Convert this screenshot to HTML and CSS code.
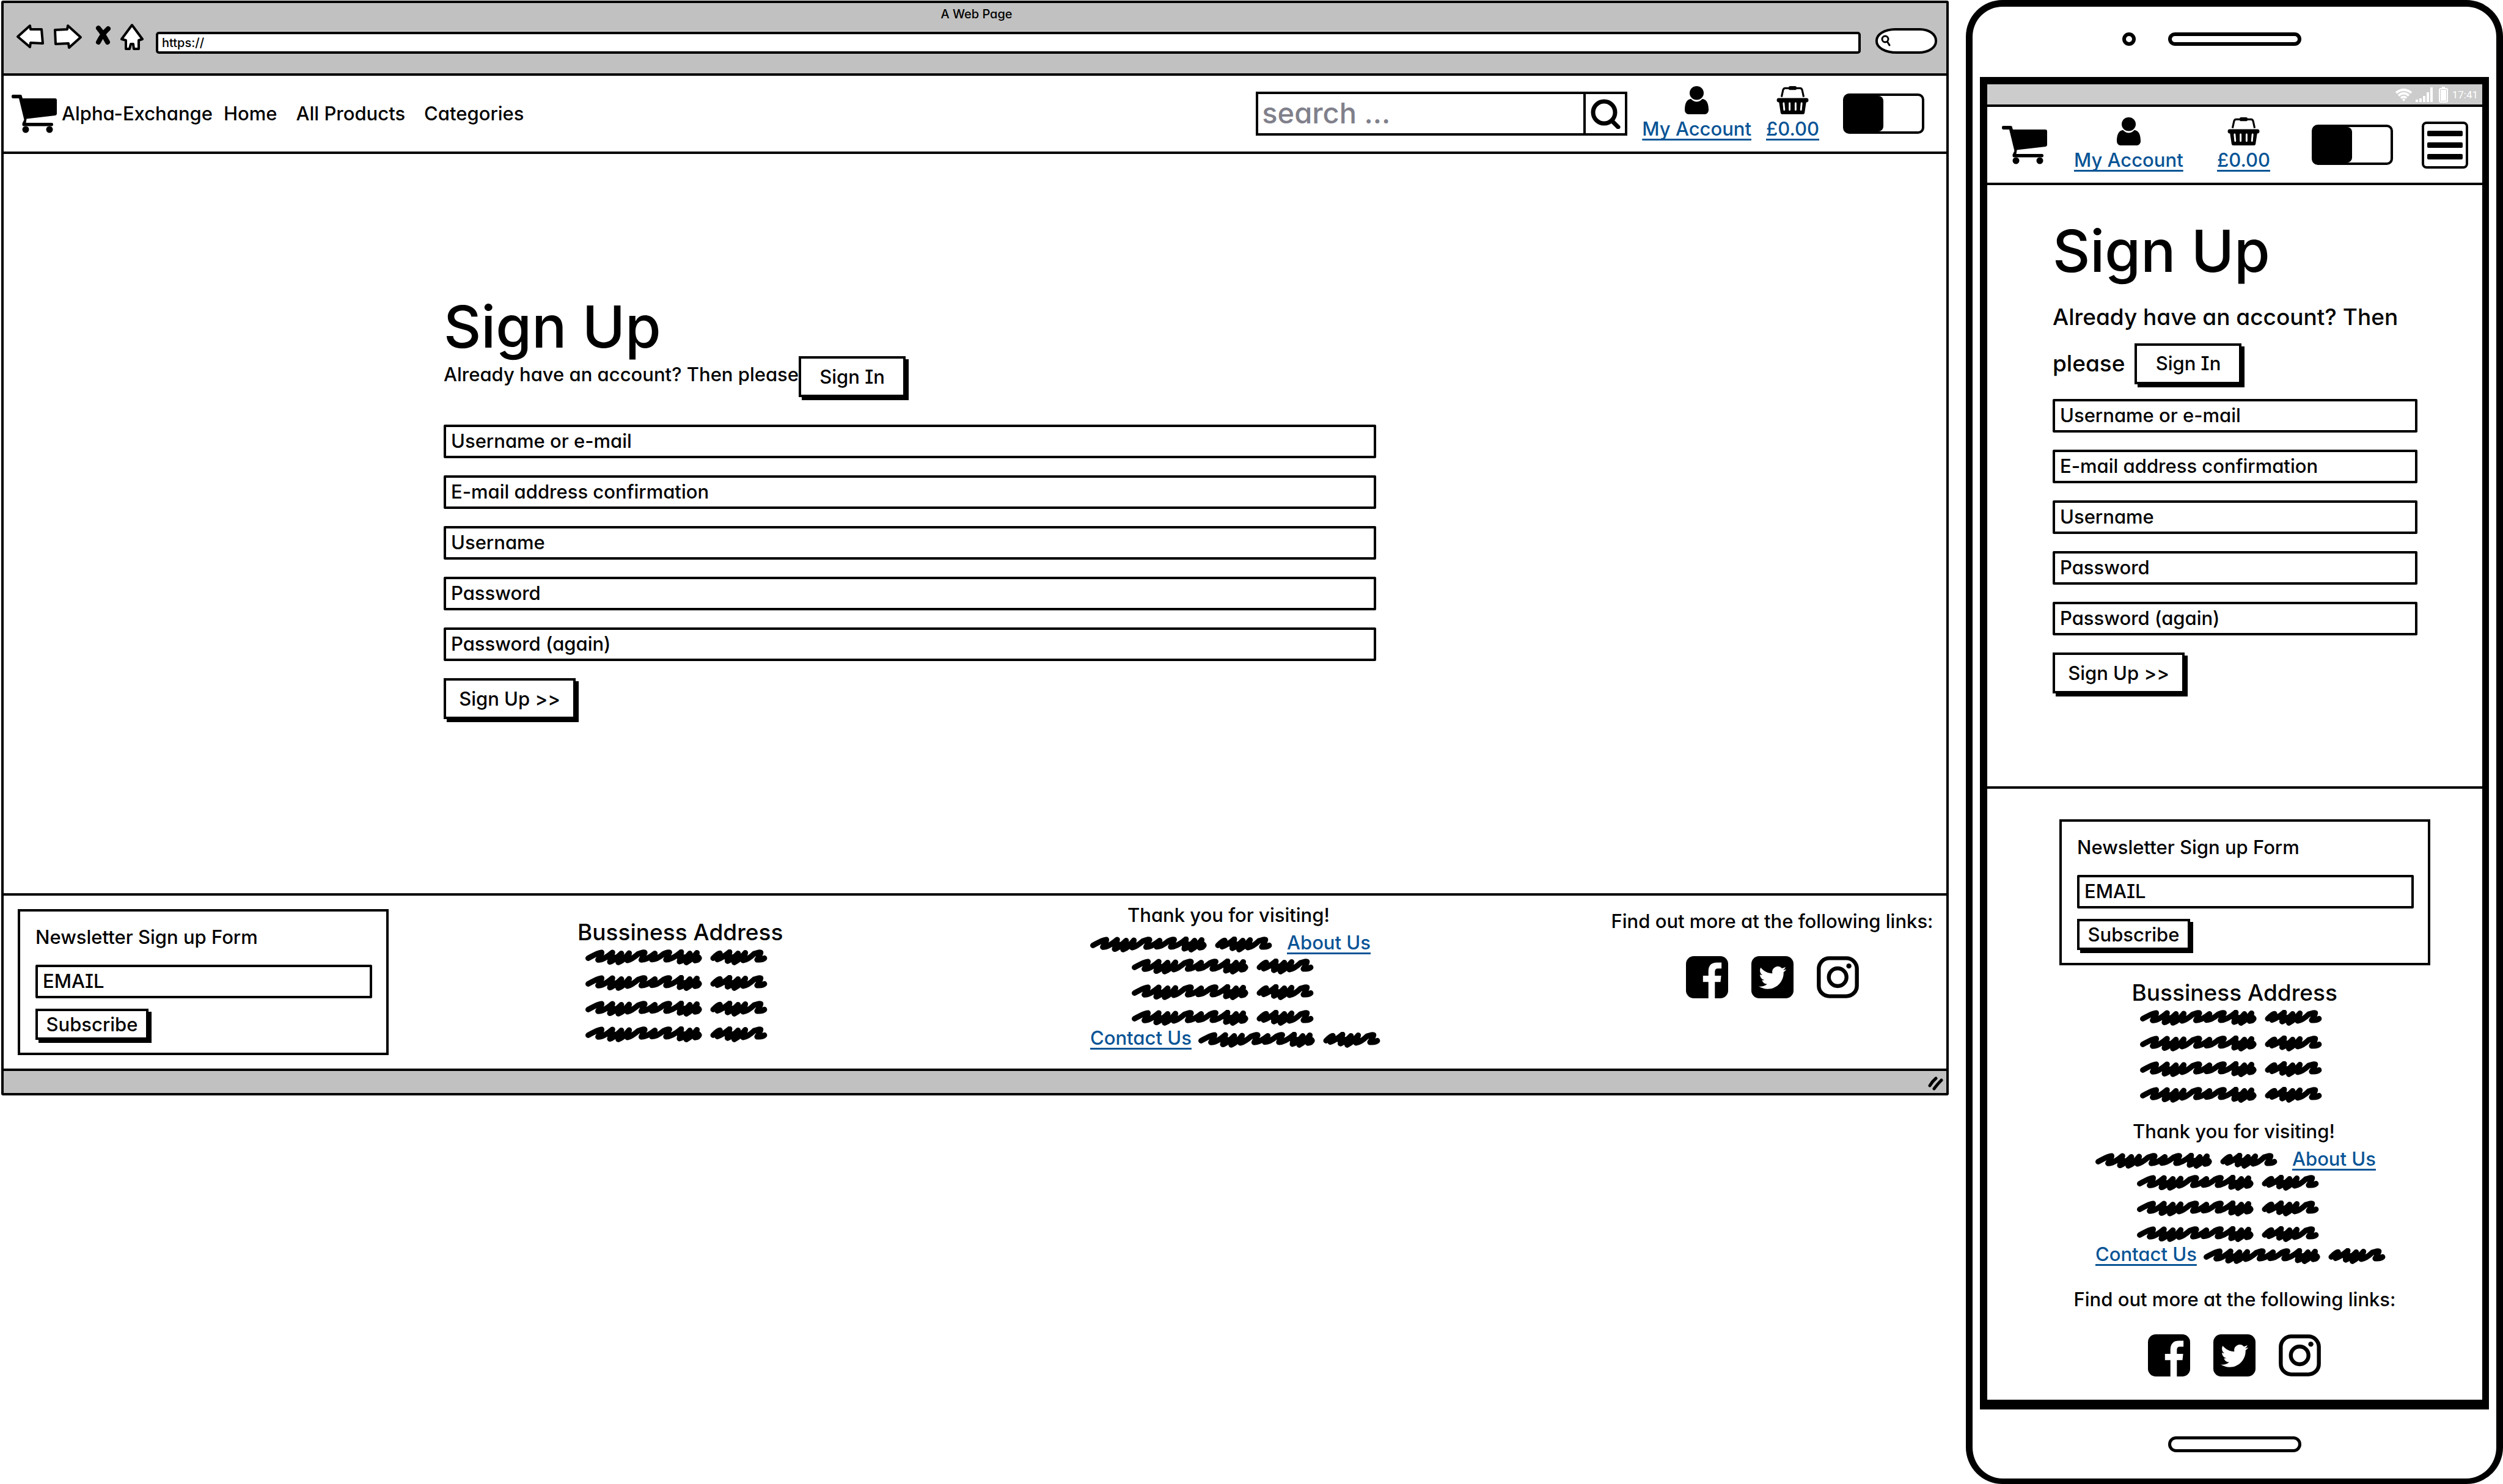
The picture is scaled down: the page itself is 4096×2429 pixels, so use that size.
FILE: index.html
```html
<!DOCTYPE html>
<html lang="en">
<head>
<meta charset="utf-8">
<title>Alpha-Exchange – Sign Up</title>
<link rel="stylesheet" href="styles.css">
</head>
<body>

<svg class="sprite" width="0" height="0" aria-hidden="true">
  <symbol id="cart" viewBox="0 0 74 63">
    <path d="M2 0H14Q17 0 17 3L18 6H71Q74 6 74 9V31Q74 33.500 71.500 34L24.500 39.500L23.500 46H65.500Q68 46 68 48.500Q68 51.500 65.500 51.500H20Q17 51.500 17.500 47L20.500 41L12 6H2.500Q0 6 0 3Q0 0 2 0Z"/>
    <circle cx="23" cy="57" r="5.500"/><circle cx="62" cy="57" r="5.500"/>
  </symbol>
  <symbol id="person" viewBox="0 0 39 46">
    <ellipse cx="19.500" cy="11.300" rx="11.500" ry="11.300"/>
    <path d="M8 21.500C10 20.500 11 21.500 12 22.500C16 26.500 23 26.500 27 22.500C28 21.500 29 20.500 31 21.500C37 23 39 31 39 39C39 43 36 46 33 46H6C3 46 0 43 0 39C0 31 2 23 8 21.500Z"/>
  </symbol>
  <symbol id="basket" viewBox="0 0 53 47">
    <path d="M8 18L10.500 6.500Q11.500 3.500 14 3.500H39Q41.500 3.500 42.500 6.500L45 18" fill="none" stroke="#000" stroke-width="3.200"/>
    <rect x="20" y="0" width="13" height="6.500" rx="2"/>
    <rect x="0" y="20" width="53" height="7" rx="3.500"/>
    <path d="M3.500 25H49.500L46.500 45Q46 47 44 47H9Q7 47 6.500 45Z"/>
    <path d="M11.500 28.500L12.500 39.500M21.500 28.500V39.500M31.500 28.500V39.500M41.500 28.500L40.500 39.500" stroke="#fff" stroke-width="3" stroke-linecap="round"/>
  </symbol>
  <symbol id="glass" viewBox="0 0 49 49">
    <circle cx="22" cy="22" r="18" fill="none" stroke="#000" stroke-width="7"/>
    <path d="M35 36L45 46" stroke="#000" stroke-width="7" stroke-linecap="round"/>
  </symbol>
  <symbol id="scribble" viewBox="38 32 1076 94">
    <g fill="none" stroke="#000" stroke-width="33" stroke-linecap="round" stroke-linejoin="round">
      <path d="M54 84Q120 46 133 50Q136 54 112 94Q140 98 197 50L182 106Q200 104 250 56L232 109Q262 98 296 54L286 97Q310 92 350 58Q390 44 388 52Q384 60 368 94Q400 94 448 56L430 92Q460 92 500 58Q540 44 533 52Q528 62 514 93Q550 92 604 47L594 104Q620 98 655 56L634 109Q668 92 697 52L686 98Q706 96 710 84"/>
      <path d="M182 80H296M594 78H706M870 78H960"/>
      <path d="M793 84Q825 52 833 55L818 92Q850 80 890 47L878 101Q905 92 940 56L918 109Q950 92 983 52L970 97Q1000 92 1035 58Q1070 46 1074 50Q1074 60 1053 93Q1085 96 1096 84"/>
    </g>
  </symbol>
  <symbol id="facebook" viewBox="0 0 248 248">
    <rect width="248" height="248" rx="46"/>
    <path fill="#fff" d="M132 248V152H100V115H132V90Q132 38 182 38H209V73H188Q170 73 170 92V115H207L203 152H170V248Z"/>
  </symbol>
  <symbol id="twitter" viewBox="0 0 248 248">
    <rect width="248" height="248" rx="46"/>
    <path fill="#fff" transform="translate(44 46) scale(6.750)" d="M23.953 4.570a10 10 0 01-2.825.775 4.958 4.958 0 002.163-2.723c-.951.555-2.005.959-3.127 1.184a4.920 4.920 0 00-8.384 4.482C7.690 8.095 4.067 6.130 1.640 3.162a4.822 4.822 0 00-.666 2.475c0 1.710.870 3.213 2.188 4.096a4.904 4.904 0 01-2.228-.616v.060a4.923 4.923 0 003.946 4.827 4.996 4.996 0 01-2.212.085 4.936 4.936 0 004.604 3.417 9.867 9.867 0 01-6.102 2.105c-.390 0-.779-.023-1.170-.067a13.995 13.995 0 007.557 2.209c9.053 0 13.998-7.496 13.998-13.985 0-.210 0-.420-.015-.630A9.935 9.935 0 0024 4.590z"/>
  </symbol>
  <symbol id="instagram" viewBox="0 0 248 248">
    <rect x="12" y="12" width="224" height="224" rx="62" fill="none" stroke="#000" stroke-width="23"/>
    <circle cx="123" cy="124" r="52" fill="none" stroke="#000" stroke-width="23"/>
    <circle cx="189" cy="58" r="15"/>
  </symbol>
</svg>

<div class="canvas">

  <section class="browser">
    <header class="chrome">
      <div class="chrome-title">A Web Page</div>
      <div class="toolbar">
        <button class="tool" type="button" aria-label="Back"><svg width="46" height="42" viewBox="0 0 46 42"><path class="arrow" d="M3 22L23 4L24 10L42 10L44 33L24 32L23 39Z"/></svg></button>
        <button class="tool" type="button" aria-label="Forward"><svg width="48" height="43" viewBox="0 0 48 43"><path class="arrow" d="M3 11L23 10L24 4L45 23L26 40L25 33L4 34Z"/></svg></button>
        <button class="tool tool-stop" type="button" aria-label="Stop"><svg width="26" height="36" viewBox="0 0 26 36"><path d="M5 8Q12 16 20 31M21 9Q12 17 5 31" fill="none" stroke="#000" stroke-width="8" stroke-linecap="round"/></svg></button>
        <button class="tool" type="button" aria-label="Home page"><svg width="38" height="45" viewBox="0 0 38 45"><path class="arrow" d="M19 3L36 26L30 28L30 42L22 42L21 34L17 34L15 42L9 42L9 28L2 26Z"/></svg></button>
        <input class="url" type="text" value="https://" aria-label="Address">
        <button class="pill" type="button" aria-label="Search the web"><svg width="18" height="20" viewBox="0 0 18 20"><circle cx="8" cy="7" r="5" fill="none" stroke="#000" stroke-width="3"/><path d="M12 12L15 17" stroke="#000" stroke-width="3" stroke-linecap="round"/></svg></button>
      </div>
    </header>

    <nav class="site-nav">
      <svg class="cart" width="74" height="63"><use href="#cart"/></svg>
      <a class="nav-link brand" href="#">Alpha-Exchange</a>
      <a class="nav-link home" href="#">Home</a>
      <a class="nav-link" href="#">All Products</a>
      <a class="nav-link" href="#">Categories</a>
      <form class="search">
        <input class="search-input" type="search" placeholder="search ..." aria-label="Search products">
        <button class="search-button" type="button" aria-label="Search"><svg width="49" height="49"><use href="#glass"/></svg></button>
      </form>
      <div class="icon-link"><svg width="39" height="46"><use href="#person"/></svg><a href="#">My Account</a></div>
      <div class="icon-link"><svg width="53" height="46"><use href="#basket"/></svg><a href="#">£0.00</a></div>
      <input class="toggle" type="checkbox" aria-label="Dark mode">
    </nav>

    <main class="desktop-main">
      <h1>Sign Up</h1>
      <div class="signin-row">
        <span>Already have an account? Then please</span>
        <button class="button signin" type="button">Sign In</button>
      </div>
      <form class="fields">
        <input class="field" type="text" placeholder="Username or e-mail" aria-label="Username or e-mail">
        <input class="field" type="email" placeholder="E-mail address confirmation" aria-label="E-mail address confirmation">
        <input class="field" type="text" placeholder="Username" aria-label="Username">
        <input class="field" type="password" placeholder="Password" aria-label="Password">
        <input class="field" type="password" placeholder="Password (again)" aria-label="Password (again)">
        <button class="button signup" type="button">Sign Up &gt;&gt;</button>
      </form>
    </main>

    <footer class="desktop-footer">
      <form class="newsletter">
        <label for="news-desktop">Newsletter Sign up Form</label>
        <input class="field" id="news-desktop" type="email" placeholder="EMAIL">
        <button class="button subscribe" type="button">Subscribe</button>
      </form>
      <section class="business">
        <h2>Bussiness Address</h2>
        <div class="lines">
          <svg class="scribble"><use href="#scribble"/></svg>
          <svg class="scribble"><use href="#scribble"/></svg>
          <svg class="scribble"><use href="#scribble"/></svg>
          <svg class="scribble"><use href="#scribble"/></svg>
        </div>
      </section>
      <section class="thanks">
        <p class="thanks-title">Thank you for visiting!</p>
        <div class="mixed about"><svg class="scribble"><use href="#scribble"/></svg><a href="#">About Us</a></div>
        <div class="lines">
          <svg class="scribble"><use href="#scribble"/></svg>
          <svg class="scribble"><use href="#scribble"/></svg>
          <svg class="scribble"><use href="#scribble"/></svg>
        </div>
        <div class="mixed contact"><a href="#">Contact Us</a><svg class="scribble"><use href="#scribble"/></svg></div>
      </section>
      <section class="social">
        <p>Find out more at the following links:</p>
        <div class="social-icons">
          <a href="#" aria-label="Facebook"><svg width="69" height="69"><use href="#facebook"/></svg></a>
          <a href="#" aria-label="Twitter"><svg width="69" height="69"><use href="#twitter"/></svg></a>
          <a href="#" aria-label="Instagram"><svg width="69" height="69"><use href="#instagram"/></svg></a>
        </div>
      </section>
    </footer>

    <div class="status-strip">
      <svg width="28" height="24" viewBox="0 0 28 24"><path d="M4 15Q8 8 14 3M11 20Q17 12 23 6" fill="none" stroke="#000" stroke-width="5" stroke-linecap="round"/></svg>
    </div>
  </section>

  <section class="phone">
    <div class="bezel-top">
      <span class="camera"></span>
      <span class="speaker"></span>
    </div>

    <div class="screen">
      <div class="phone-status">
        <svg width="29" height="22" viewBox="0 0 29 22"><path d="M2 8Q14.500 -2 27 8M6 12.500Q14.500 5 23 12.500M10 16.500Q14.500 12.500 19 16.500" fill="none" stroke="#fff" stroke-width="4"/><circle cx="14.500" cy="19.500" r="2"/></svg>
        <svg width="28" height="24" viewBox="0 0 28 24"><path d="M0 20h4v4h-4zM6 18h4v6h-4zM12 14h4v10h-4zM18 8h4v16h-4zM24 0h4v24h-4z"/></svg>
        <svg class="battery" width="15" height="26" viewBox="0 0 15 26"><path d="M5 0h5v3h-5z"/><rect x="1" y="3" width="13" height="22" rx="2" fill="none" stroke="#fff" stroke-width="2"/><path d="M3 5h9v18h-9z"/></svg>
        <span class="clock">17:41</span>
      </div>

      <nav class="phone-nav">
        <svg class="cart" width="74" height="63"><use href="#cart"/></svg>
        <div class="icon-link"><svg width="39" height="46"><use href="#person"/></svg><a href="#">My Account</a></div>
        <div class="icon-link"><svg width="53" height="46"><use href="#basket"/></svg><a href="#">£0.00</a></div>
        <input class="toggle" type="checkbox" aria-label="Dark mode">
        <button class="menu" type="button" aria-label="Menu"><span></span><span></span><span></span></button>
      </nav>

      <main class="phone-main">
        <h1>Sign Up</h1>
        <div class="signin-text">
          <p>Already have an account? Then</p>
          <div class="signin-line"><span>please</span><button class="button signin" type="button">Sign In</button></div>
        </div>
        <form class="fields">
          <input class="field" type="text" placeholder="Username or e-mail" aria-label="Username or e-mail">
          <input class="field" type="email" placeholder="E-mail address confirmation" aria-label="E-mail address confirmation">
          <input class="field" type="text" placeholder="Username" aria-label="Username">
          <input class="field" type="password" placeholder="Password" aria-label="Password">
          <input class="field" type="password" placeholder="Password (again)" aria-label="Password (again)">
          <button class="button signup" type="button">Sign Up &gt;&gt;</button>
        </form>
      </main>

      <footer class="phone-footer">
        <form class="newsletter">
          <label for="news-phone">Newsletter Sign up Form</label>
          <input class="field" id="news-phone" type="email" placeholder="EMAIL">
          <button class="button subscribe" type="button">Subscribe</button>
        </form>
        <section class="business">
          <h2>Bussiness Address</h2>
          <div class="lines">
            <svg class="scribble"><use href="#scribble"/></svg>
            <svg class="scribble"><use href="#scribble"/></svg>
            <svg class="scribble"><use href="#scribble"/></svg>
            <svg class="scribble"><use href="#scribble"/></svg>
          </div>
        </section>
        <section class="thanks">
          <p class="thanks-title">Thank you for visiting!</p>
          <div class="mixed about"><svg class="scribble"><use href="#scribble"/></svg><a href="#">About Us</a></div>
          <div class="lines">
            <svg class="scribble"><use href="#scribble"/></svg>
            <svg class="scribble"><use href="#scribble"/></svg>
            <svg class="scribble"><use href="#scribble"/></svg>
          </div>
          <div class="mixed contact"><a href="#">Contact Us</a><svg class="scribble"><use href="#scribble"/></svg></div>
        </section>
        <section class="social">
          <p>Find out more at the following links:</p>
          <div class="social-icons">
            <a href="#" aria-label="Facebook"><svg width="69" height="69"><use href="#facebook"/></svg></a>
            <a href="#" aria-label="Twitter"><svg width="69" height="69"><use href="#twitter"/></svg></a>
            <a href="#" aria-label="Instagram"><svg width="69" height="69"><use href="#instagram"/></svg></a>
          </div>
        </section>
      </footer>
    </div>

    <div class="bezel-bottom"><span class="home-key"></span></div>
  </section>

</div>
</body>
</html>
```
FILE: styles.css
```css
* {
  box-sizing: border-box;
}

body {
  margin: 0;
  background: #fff;
  color: #000;
  font-family: Inter, Lato, sans-serif;
  font-size: 31px;
  font-weight: 500;
  line-height: 40px;
  font-feature-settings: "cv11", "cv08";
}

h1,
h2,
p {
  margin: 0;
  font-weight: 500;
}

h1 {
  font-size: 95px;
  line-height: 96px;
}

h2 {
  font-size: 37px;
  line-height: 44px;
  white-space: nowrap;
}

svg {
  display: block;
  flex: none;
}

.sprite {
  display: none;
}

input,
button {
  margin: 0;
  color: inherit;
  font: inherit;
  font-feature-settings: inherit;
}

a {
  color: #085496;
  text-decoration: underline;
  text-decoration-thickness: 3px;
  text-decoration-skip-ink: none;
  text-underline-offset: 5px;
  white-space: nowrap;
}

.canvas {
  display: grid;
  grid-template-columns: minmax(0, 3187fr) minmax(0, 879fr);
  gap: 28px;
  align-items: start;
  min-height: 100vh;
  padding-left: 2px;
}

/* Browser window */

.browser {
  margin-top: 1px;
  border: 4px solid #000;
  border-radius: 3px;
}

.chrome {
  height: 119px;
  padding: 3px 15px 0 20px;
  border-bottom: 4px solid #000;
  background: #c1c1c1;
}

.chrome-title {
  font-size: 20px;
  line-height: 30px;
  text-align: center;
}

.toolbar {
  display: flex;
  gap: 15px;
  height: 50px;
}

.tool {
  align-self: flex-start;
  padding: 0;
  border: 0;
  background: none;
}

.tool-stop {
  margin-left: 6px;
}

.arrow {
  fill: #fff;
  stroke: #000;
  stroke-width: 4px;
  stroke-linejoin: round;
}

.url {
  flex: 1;
  min-width: 0;
  align-self: flex-end;
  height: 36px;
  margin: 0 9px 0 5px;
  padding: 0 6px;
  border: 4px solid #000;
  border-radius: 5px;
  background: #fff;
  font-size: 20px;
}

.pill {
  align-self: flex-end;
  width: 101px;
  height: 42px;
  padding: 0 4px;
  border: 4px solid #000;
  border-radius: 32px 28px 30px 34px / 20px;
  background: #fff;
}

/* Navigation */

.site-nav {
  display: flex;
  align-items: center;
  height: 128px;
  padding: 0 36px 0 13px;
  border-bottom: 4px solid #000;
}

.nav-link {
  margin-left: 31px;
  color: #000;
  text-decoration: none;
}

.brand {
  margin-left: 8px;
}

.home {
  margin-left: 18px;
}

.search {
  display: flex;
  width: 608px;
  height: 72px;
  margin-left: auto;
  border: 4px solid #000;
}

.search-input {
  flex: 1;
  min-width: 0;
  padding: 0 0 4px 6px;
  border: 0;
  background: none;
  font-size: 47px;
}

.search-input::placeholder {
  color: #80808b;
  opacity: 1;
}

.search-button {
  display: grid;
  place-items: center;
  width: 68px;
  padding: 0;
  border: 0;
  border-left: 4px solid #000;
  background: #fff;
}

.icon-link {
  display: flex;
  flex-direction: column;
  align-items: center;
  gap: 4px;
}

.site-nav .icon-link {
  margin-left: 24px;
}

.toggle {
  appearance: none;
  width: 133px;
  height: 66px;
  border: 4px solid #000;
  border-radius: 10px;
  background: #fff;
}

.toggle::before {
  content: "";
  display: block;
  width: 62px;
  height: 100%;
  border-radius: 0 8px 8px 0;
  background: #000;
}

.site-nav .toggle {
  margin-left: 39px;
}

/* Sign-up form */

.desktop-main {
  width: 48%;
  margin-left: 720px;
  padding: 235px 0 285px;
}

.signin-row {
  display: flex;
  align-items: flex-start;
  line-height: 60px;
}

.button {
  height: 67px;
  border: 4px solid #000;
  background: #fff;
  box-shadow: 5px 5px 0 #000;
  font-size: 31px;
  line-height: 40px;
  white-space: nowrap;
}

.signin {
  width: 175px;
  padding: 0;
}

.signup {
  width: 216px;
  padding: 0;
}

.fields {
  display: grid;
  justify-items: start;
  gap: 28px;
  margin-top: 45px;
}

.field {
  width: 100%;
  height: 55px;
  padding: 0 8px 3px;
  border: 4px solid #000;
  border-radius: 2px;
  background: #fff;
}

.field::placeholder {
  color: #000;
  opacity: 1;
}

/* Footer */

.desktop-footer {
  display: grid;
  grid-template-columns: minmax(0, 916fr) minmax(0, 839fr) minmax(0, 856fr) minmax(0, 520fr);
  align-items: start;
  height: 291px;
  padding: 0 25px 0 23px;
  border-top: 4px solid #000;
  border-bottom: 4px solid #000;
}

.newsletter {
  display: grid;
  justify-items: start;
  align-content: start;
  width: 607px;
  height: 239px;
  padding: 22px 23px 0 25px;
  border: 4px solid #000;
}

.newsletter .field {
  margin: 25px 0 17px;
}

.subscribe {
  width: 185px;
  height: 51px;
  padding: 0;
}

.lines {
  display: grid;
  gap: 16px;
}

.scribble {
  width: 298px;
  height: 26px;
}

.business .lines {
  padding: 6px 0 0 13px;
}

.thanks .lines {
  padding: 6px 0 0 68px;
}

.thanks-title {
  padding-left: 61px;
}

.mixed {
  display: flex;
  align-items: center;
}

.mixed .scribble {
  margin-top: 6px;
}

.about {
  gap: 24px;
  margin-top: 5px;
}

.contact {
  gap: 11px;
}

.social {
  display: grid;
  justify-content: center;
  justify-items: center;
  gap: 37px;
  white-space: nowrap;
}

.social-icons {
  display: flex;
  gap: 38px;
}

.desktop-footer .newsletter {
  margin-top: 22px;
}

.desktop-footer .business {
  margin-top: 38px;
}

.desktop-footer .thanks {
  margin-top: 12px;
}

.desktop-footer .social {
  margin-top: 22px;
}

.status-strip {
  display: flex;
  justify-content: flex-end;
  align-items: center;
  height: 36px;
  padding: 6px 3px 0 0;
  background: #c1c1c1;
}

/* Phone */

.phone {
  display: flex;
  flex-direction: column;
  min-height: 100vh;
  border: solid #000;
  border-width: 11px 11px 9px;
  border-radius: 60px;
}

.bezel-top {
  display: grid;
  grid-template-columns: 1fr 218px 1fr;
  align-items: center;
  height: 115px;
  padding-bottom: 10px;
}

.camera {
  justify-self: end;
  width: 22px;
  height: 22px;
  margin-right: 53px;
  border: 6px solid #000;
  border-radius: 50%;
}

.speaker {
  height: 22px;
  border: 6px solid #000;
  border-radius: 11px;
}

.screen {
  flex: 1;
  margin: 0 12px;
  border: solid #000;
  border-width: 12px 11px 16px 12px;
}

.phone-status {
  display: flex;
  justify-content: flex-end;
  align-items: center;
  gap: 5px;
  height: 37px;
  padding-right: 7px;
  border-bottom: 4px solid #000;
  background: #ccc;
  color: #fff;
  fill: #fff;
}

.battery {
  margin: 0 2px 0 5px;
}

.clock {
  font-family: Roboto, sans-serif;
  font-size: 17px;
  font-weight: 400;
  line-height: 24px;
}

.phone-nav {
  display: grid;
  grid-template-columns: 118fr 234fr 155fr 180fr 76fr;
  align-items: center;
  justify-items: start;
  height: 128px;
  padding: 0 23px 0 24px;
  border-bottom: 4px solid #000;
}

.menu {
  display: grid;
  align-content: center;
  gap: 10px;
  width: 76px;
  height: 77px;
  padding: 0 5px;
  border: 4px solid #000;
  border-radius: 8px;
  background: #fff;
}

.menu span {
  height: 9px;
  border-radius: 2px;
  background: #000;
}

.phone-main {
  padding: 60px 106px 152px 107px;
  border-bottom: 4px solid #000;
}

.signin-text {
  margin-top: 22px;
  font-size: 37px;
  line-height: 76px;
}

.signin-line {
  display: flex;
  align-items: center;
  gap: 16px;
}

.phone-main .fields {
  margin-top: 20px;
}

.phone-footer {
  display: grid;
  grid-template-columns: minmax(0, 1fr);
  padding: 50px 0 36px;
}

.phone-footer .newsletter {
  margin-left: 118px;
}

.phone-footer .business {
  width: 337px;
  margin: 23px auto 0;
}

.phone-footer .thanks {
  width: 475px;
  margin: 27px 0 0 177px;
}

.phone-footer .social {
  margin-top: 34px;
}

.bezel-bottom {
  display: grid;
  place-items: center;
  height: 113px;
}

.home-key {
  width: 218px;
  height: 26px;
  border: 5px solid #000;
  border-radius: 13px;
}
```
